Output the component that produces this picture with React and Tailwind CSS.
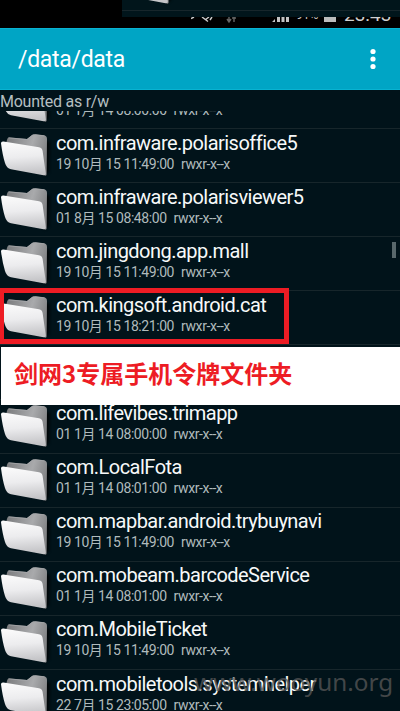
const rows = [
  { name: '', date: '01 1月 14 08:00:00' },
  { name: 'com.infraware.polarisoffice5', date: '19 10月 15 11:49:00' },
  { name: 'com.infraware.polarisviewer5', date: '01 8月 15 08:48:00' },
  { name: 'com.jingdong.app.mall', date: '19 10月 15 11:49:00' },
  { name: 'com.kingsoft.android.cat', date: '19 10月 15 18:21:00' },
  { name: '', date: '' },
  { name: 'com.lifevibes.trimapp', date: '01 1月 14 08:00:00' },
  { name: 'com.LocalFota', date: '01 1月 14 08:01:00' },
  { name: 'com.mapbar.android.trybuynavi', date: '19 10月 15 11:49:00' },
  { name: 'com.mobeam.barcodeService', date: '01 1月 14 08:01:00' },
  { name: 'com.MobileTicket', date: '19 10月 15 11:49:00' },
  { name: 'com.mobiletools.systemhelper', date: '22 7月 15 23:05:00' },
];

function Folder() {
  return (
    <svg className="block h-[54px] w-[56px] shrink-0" viewBox="0 0 56 54">
      <defs>
        <linearGradient id="front" x1="0" y1="0" x2="0.1" y2="1">
          <stop offset="0" stopColor="#fcfcfc" />
          <stop offset="0.5" stopColor="#ececee" />
          <stop offset="1" stopColor="#c4c4c7" />
        </linearGradient>
        <linearGradient id="back" x1="0" y1="0" x2="1" y2="0.3">
          <stop offset="0" stopColor="#77787a" />
          <stop offset="0.65" stopColor="#a9aaac" />
          <stop offset="1" stopColor="#858688" />
        </linearGradient>
        <filter id="soft" x="-20%" y="-20%" width="140%" height="140%">
          <feGaussianBlur stdDeviation="1.6" />
        </filter>
      </defs>
      <path d="M40 10L50 13L49 43L44 47Z" fill="#000" opacity="0.75" filter="url(#soft)" />
      <path d="M6 14L7.500 9.500Q8 8.300 9.500 8.400L27 10L32 6Q33.500 5 36 5.200L44 6.200Q47 6.700 47 10L46.600 45.500Q46.500 47 45 46.500L38 43Z" fill="url(#back)" />
      <path d="M8.500 8.800L27 10.500L33 5.900L44.500 6.900" fill="none" stroke="#a6a7a9" strokeWidth="0.8" />
      <path d="M1 14.200Q1 12.200 3.500 12.500L39 18.200Q42.300 19 42.600 22L45.800 44.500Q46 46.700 43.500 46.200L11 40.200Q6.500 39.200 5 34Q2.500 26 1 14.200Z" fill="url(#front)" />
    </svg>
  );
}

function Row({ name, date }) {
  return (
    <li className="flex h-[54.100px] border-b border-[#17262b]">
      <Folder />
      <div className="flex flex-col whitespace-nowrap pt-[1.500px]">
        <span className="h-6 text-[20px] leading-6 tracking-[-0.530px] text-[#f7f9f9]">{name}</span>
        <span className="flex gap-[7px] text-[14px] leading-[19px] tracking-[-0.420px] text-[#b0bbbd]">
          <span>{date}</span>
          <span>{date && 'rwxr-x--x'}</span>
        </span>
      </div>
    </li>
  );
}

function StatusBar() {
  return (
    <div className="relative h-7 overflow-hidden bg-black text-[#c4c4c4]">
      <div className="absolute left-[191px] top-[17px] h-[8px] w-[209px] overflow-hidden">
        <svg className="absolute inset-0" width="209" height="8" viewBox="0 0 209 8">
          <path d="M0 1.500L3 0M11 0L17 4.500M14 3L18 0M19 3L21 0" stroke="#ccc" strokeWidth="1.4" fill="none" />
          <path d="M38 0V4M36 2L38 5L40 2M43 5V0M41 1H45" stroke="#666" strokeWidth="1.4" fill="none" />
          <path d="M81 5L84 2V5ZM86 0H89V5H86ZM90.500 0H93.500V5H90.500ZM95 0H98V5H95Z" fill="#c4c4c4" />
          <path d="M133 0H145V5H133Z" fill="#bcbcbc" />
        </svg>
        <span className="absolute left-[105px] top-[-9px] text-[12px] leading-[14px]">91%</span>
        <span className="absolute left-[153px] top-[-13px] text-[19px] leading-[22px] text-[#d0d0d0]">23:43</span>
      </div>
      <div className="absolute left-[122px] top-0 h-[17px] w-[278px] overflow-hidden bg-[#01151b]">
        <div className="absolute -top-[43px] left-0">
          <Folder />
        </div>
        <div className="absolute top-[10px] h-px w-full bg-[#17262b]" />
      </div>
    </div>
  );
}

export default function App() {
  return (
    <div className="relative flex h-[711px] w-[400px] flex-col overflow-hidden bg-[#01131a] font-[Roboto,'Noto_Sans_CJK_SC',sans-serif]">
      <StatusBar />
      <header className="flex h-[62px] shrink-0 items-center justify-between border-y border-[#08b3d2] bg-[#00a5c5] pl-[18px] pr-[24px]">
        <h1 className="pt-[2px] text-[23px] leading-7 tracking-[-0.300px] text-white">/data/data</h1>
        <svg width="6" height="22" viewBox="0 0 6 22" fill="white">
          <circle cx="3" cy="3.500" r="2.600" />
          <circle cx="3" cy="11" r="2.600" />
          <circle cx="3" cy="18.500" r="2.600" />
        </svg>
      </header>
      <div className="h-[21px] shrink-0 pt-[2px] text-[16px] leading-[19px] tracking-[-0.250px] text-[#b5bfc1]">Mounted as r/w</div>
      <div className="min-h-0 flex-1 overflow-hidden">
        <ul className="-mt-[36px]">
          {rows.map((row, i) => (
            <Row key={i} {...row} />
          ))}
        </ul>
      </div>
      <div className="absolute left-[392px] top-[242px] h-[16px] w-[4px] bg-[#59686c]" />
      <div className="absolute left-0 top-[288px] h-[56px] w-[289px] border-[5px] border-l-4 border-[#ed1c24]" />
      <div className="absolute left-px top-[347px] flex h-[58px] w-[399px] items-center bg-white pb-[6px] pl-[13px] font-['Noto_Sans_CJK_SC',sans-serif] text-[24px] font-bold text-[#ed1c24]">
        <span className="whitespace-nowrap">剑网3专属手机令牌文件夹</span>
      </div>
      <div className="absolute left-[194px] top-[666px] whitespace-nowrap font-['Noto_Sans',sans-serif] text-[24.300px] leading-8 text-[#555]/80">www.wooyun.org</div>
    </div>
  );
}
